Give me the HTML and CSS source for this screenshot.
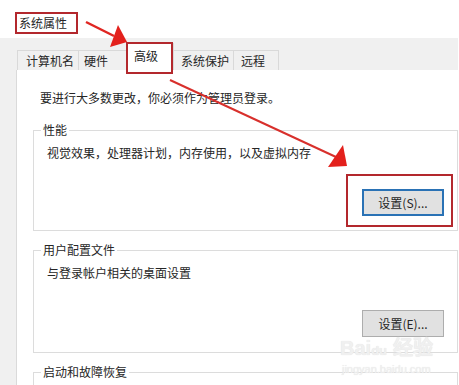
FILE: index.html
```html
<!DOCTYPE html>
<html lang="zh-CN">
<head>
  <meta charset="UTF-8">
  <title>系统属性</title>
  <link rel="stylesheet" href="styles.css">
</head>
<body>
  <div class="window">
    <!-- Judul jendela -->
    <div class="caption"><span class="title">系统属性</span></div>

    <div class="dialog">
      <!-- Tab -->
      <div class="tabs">
        <div class="tab tab-name">计算机名</div>
        <div class="tab tab-hw">硬件</div>
        <div class="tab tab-adv active">高级</div>
        <div class="tab tab-prot">系统保护</div>
        <div class="tab tab-remote">远程</div>
      </div>

      <!-- Halaman "高级" -->
      <div class="page">
        <p class="note">要进行大多数更改，你必须作为管理员登录。</p>

        <fieldset class="group">
          <legend>性能</legend>
          <p class="desc">视觉效果，处理器计划，内存使用，以及虚拟内存</p>
          <div class="actions">
            <span class="marked"><button class="btn focus">设置(S)...</button></span>
          </div>
        </fieldset>

        <fieldset class="group group-profile">
          <legend>用户配置文件</legend>
          <p class="desc">与登录帐户相关的桌面设置</p>
          <div class="actions">
            <button class="btn">设置(E)...</button>
          </div>
        </fieldset>

        <fieldset class="group">
          <legend>启动和故障恢复</legend>
        </fieldset>
      </div>
    </div>

    <!-- Panah penanda -->
    <svg class="arrows" width="459" height="385" viewBox="0 0 459 385">
      <line x1="86" y1="22" x2="114" y2="36" stroke="#e02622" stroke-width="2.5"/>
      <polygon points="118,25 110,47 127,42" fill="#e3201c"/>
      <line x1="170" y1="80" x2="336" y2="157" stroke="#d8302c" stroke-width="2"/>
      <polygon points="343,145 328,167 347,166" fill="#e3201c"/>
    </svg>

    <!-- Watermark -->
    <div class="watermark">
      <div class="wm-logo">Bai<span class="wm-du">du</span> 经验</div>
      <div class="wm-url">jingyan.baidu.com</div>
    </div>
  </div>
</body>
</html>
```

FILE: styles.css
```css
/* Reset dasar */
* {
  margin: 0;
  padding: 0;
  box-sizing: border-box;
}
body {
  background: #fff;
  font-family: "Noto Sans CJK SC", "Liberation Sans", sans-serif;
  font-size: 12px;
  color: #262626;
}

.window {
  position: relative;
  width: 459px;
  height: 385px;
  overflow: hidden;
}

/* Judul */
.caption {
  height: 38px;
  padding: 12px 0 0 15px;
}
.title {
  display: inline-block;
  width: 63px;
  height: 22px;
  border: 2px solid #b3282d;
  padding-left: 2px;
  line-height: 18px;
}

/* Area dialog abu-abu */
.dialog {
  width: 458px;
  height: 347px;
  background: #f0f0f0;
}

/* Tab */
.tabs {
  display: flex;
  align-items: flex-end;
  height: 32px;
  padding-left: 17px;
}
.tab {
  height: 20px;
  line-height: 19px;
  padding-left: 7px;
  border: 1px solid #d9d9d9;
  border-bottom: none;
  border-left: none;
  white-space: nowrap;
}
.tab-name { width: 62px; border-left: 1px solid #d9d9d9; padding-left: 8px; }
.tab-hw { width: 48px; padding-left: 5px; }
.tab-adv { width: 48px; }
.tab-prot { width: 60px; }
.tab-remote { width: 45px; }
.tab.active {
  position: relative;
  height: 27px;
  line-height: 24px;
  background: #fff;
  border-left: 1px solid #d9d9d9;
  margin-left: -1px;
  padding-left: 7px;
}
/* Kotak merah penanda */
.tab.active::after {
  content: "";
  position: absolute;
  top: -2px;
  left: -1px;
  right: 0;
  bottom: -4px;
  border: 2px solid #b3282d;
}

/* Halaman */
.page {
  margin-left: 16px;
  height: 315px;
  background: #fff;
  border-left: 1px solid #dadada;
  padding: 20px 0 0 16px;
}
.note {
  margin-left: 7px;
  line-height: 16px;
}

.group {
  margin-top: 16px;
  border: 1px solid #dcdcdc;
  padding: 0 13px 14px 7px;
}
.group + .group {
  margin-top: 11px;
}
.group legend {
  padding: 0 2px;
  line-height: 16px;
}
.group-profile {
  padding-bottom: 15px;
}
.group-profile .actions {
  margin-top: 29px;
}
.desc {
  margin: 7px 0 0 6px;
  line-height: 16px;
}
.actions {
  display: flex;
  justify-content: flex-end;
  margin-top: 28px;
}

/* Tombol */
.btn {
  width: 82px;
  height: 27px;
  background: #e1e1e1;
  border: 1px solid #adadad;
  font-family: inherit;
  font-size: 12px;
  color: #262626;
}
.btn.focus {
  border: 2px solid #2a72b5;
}
.marked {
  position: relative;
  display: block;
  height: 27px;
}
.marked::after {
  content: "";
  position: absolute;
  top: -15px;
  bottom: -11px;
  left: -16px;
  right: -9px;
  border: 2px solid #b3282d;
}

/* Panah */
.arrows {
  position: absolute;
  top: 0;
  left: 0;
  pointer-events: none;
}

/* Watermark */
.watermark {
  position: absolute;
  left: 340px;
  top: 336px;
  color: #f0f0f0;
  text-shadow: 0 0 1px #dedede;
  text-align: center;
}
.wm-logo {
  font-family: "Liberation Sans", sans-serif;
  font-size: 20px;
  font-weight: bold;
  line-height: 24px;
}
.wm-du {
  font-size: 13px;
}
.wm-url {
  font-family: "Liberation Sans", sans-serif;
  font-size: 11px;
  line-height: 12px;
}
```
